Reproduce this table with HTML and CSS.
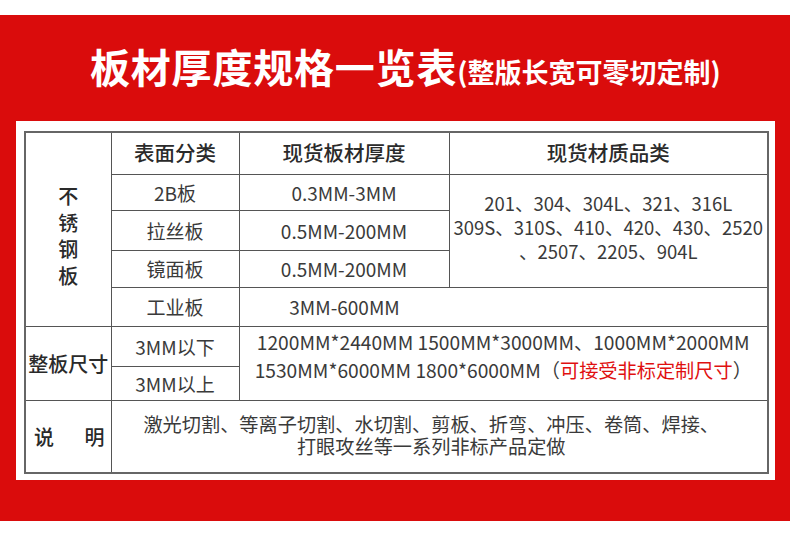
FILE: index.html
```html
<!DOCTYPE html>
<html lang="zh-CN">
<head>
<meta charset="utf-8">
<title>板材厚度规格一览表</title>
<link rel="stylesheet" href="styles.css">
</head>
<body>
<div class="strip"></div>
<section class="banner">
  <h1 class="title">板材厚度规格一览表<span class="sub">(整版长宽可零切定制)</span></h1>
  <div class="panel">
    <table class="spec">
      <colgroup><col class="c1"><col class="c2"><col class="c3"><col class="c4"></colgroup>
      <tr class="r-head">
        <td rowspan="5" class="side vert">不<br>锈<br>钢<br>板</td>
        <th>表面分类</th><th>现货板材厚度</th><th>现货材质品类</th>
      </tr>
      <tr class="r-2b">
        <td>2B板</td><td>0.3MM-3MM</td>
        <td rowspan="3" class="grades"><div>201、304、304L、321、316L</div><div>309S、310S、410、420、430、2520</div><div>、2507、2205、904L</div></td>
      </tr>
      <tr class="r-ls"><td>拉丝板</td><td>0.5MM-200MM</td></tr>
      <tr class="r-jm"><td>镜面板</td><td>0.5MM-200MM</td></tr>
      <tr class="r-gy"><td>工业板</td><td colspan="2" class="wide"><div class="w3">3MM-600MM</div></td></tr>
      <tr class="r-a">
        <td rowspan="2" class="side">整板尺寸</td><td>3MM以下</td>
        <td rowspan="2" colspan="2" class="sizes"><div>1200MM*2440MM 1500MM*3000MM、1000MM*2000MM</div><div>1530MM*6000MM 1800*6000MM（<span class="hl">可接受非标定制尺寸</span>）</div></td>
      </tr>
      <tr class="r-b"><td>3MM以上</td></tr>
      <tr class="r-note">
        <td class="side"><div class="spread"><span>说</span><span>明</span></div></td>
        <td colspan="3" class="note"><div>激光切割、等离子切割、水切割、剪板、折弯、冲压、卷筒、焊接、</div><div>打眼攻丝等一系列非标产品定做</div></td>
      </tr>
    </table>
  </div>
</section>
<div class="strip-bottom"></div>
</body>
</html>
```

FILE: styles.css
```css
* { box-sizing: border-box; }
html, body { margin: 0; padding: 0; background: #fff; }
body {
  width: 790px;
  height: 534px;
  overflow: hidden;
  font-family: "Noto Sans CJK SC", "Noto Sans", sans-serif;
  color: #333;
}
.strip { height: 15px; background: #fff; }
.banner {
  background: #da0c0c;
  height: 506px;
  padding: 0 15px 41px 16px;
}
.title {
  margin: 0;
  height: 106px;
  padding: 26px 0 0 74px;
  font-size: 40px;
  letter-spacing: 0.8px;
  line-height: 50px;
  font-weight: 700;
  color: #fff;
  white-space: nowrap;
}
.title .sub {
  font-size: 27px;
  letter-spacing: 0;
  font-weight: 700;
}
.panel {
  background: #fff;
  height: 359px;
  padding: 10px 8px 8px 8px;
}
.spec {
  width: 743px;
  height: 341px;
  table-layout: fixed;
  border-collapse: collapse;
  border: 2px solid #666;
}
.c1 { width: 86px; }
.c2 { width: 128px; }
.c3 { width: 210px; }
.c4 { width: 319px; }
.spec td, .spec th {
  border: 1px solid #555;
  padding: 0;
  text-align: center;
  vertical-align: middle;
  font-size: 19px;
  font-weight: 400;
  color: #3a3a3a;
  white-space: nowrap;
}
.spec th {
  font-size: 20.5px;
  font-weight: 500;
  color: #2a2a2a;
  padding-bottom: 3px;
}
.r-head { height: 42px; }
.r-2b { height: 36px; }
.r-ls { height: 40px; }
.r-jm { height: 37px; }
.r-gy { height: 39px; }
.r-a { height: 40px; }
.r-b { height: 34px; }
.r-note { height: 73px; }
.spec td.side {
  font-size: 20px;
  font-weight: 500;
  color: #2a2a2a;
}
.spec td.vert {
  line-height: 26.5px;
  padding-top: 14px;
}
.spread {
  display: flex;
  justify-content: space-between;
  padding: 0 6px 0 8px;
}
.spec td.wide { text-align: left; }
.w3 { width: 210px; text-align: center; }
.spec td.grades { font-size: 18.5px; line-height: 24px; padding-bottom: 7px; }
.spec td.sizes { font-size: 19.2px; line-height: 28px; padding-bottom: 14px; }
.hl { color: #e01010; }
.spec td.note { font-size: 19.2px; line-height: 22px; padding-right: 16px; padding-bottom: 2px; }
.strip-bottom { height: 13px; background: #fff; }
```
